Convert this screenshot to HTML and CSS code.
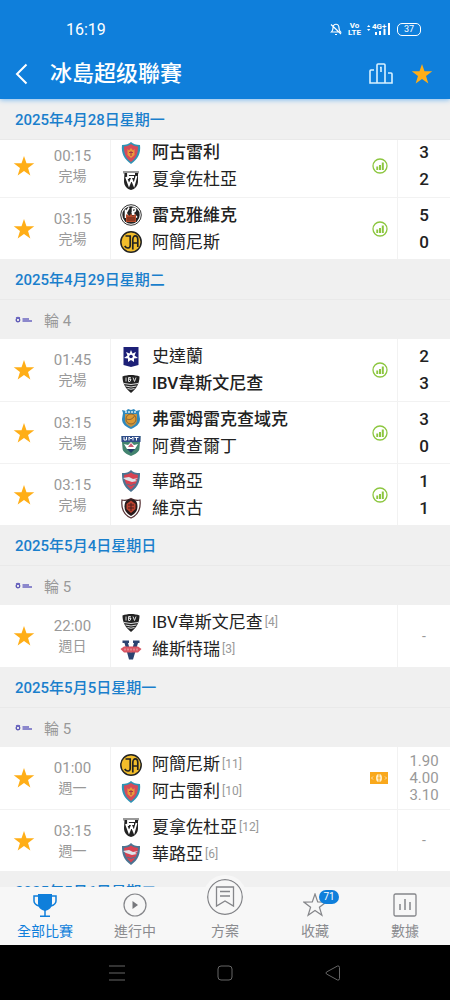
FILE: index.html
```html
<!DOCTYPE html>
<html lang="zh-Hant">

<head>
  <meta charset="UTF-8">
  <meta name="viewport" content="width=device-width, initial-scale=1.0">
  <title>冰島超级聯賽</title>
  <link rel="stylesheet" href="styles.css">
</head>

<body>
  <!-- 圖標 -->
  <svg class="sprite" aria-hidden="true">
    <symbol id="star" viewBox="0 0 24 24">
      <path d="M12 1l2.700 8 8.500.1-6.800 5.100 2.500 8.100-6.900-4.900-6.900 4.900 2.500-8.100L.8 9.100l8.500-.1z" />
    </symbol>
    <symbol id="stats" viewBox="0 0 16 16">
      <circle cx="8" cy="8" r="7" fill="none" stroke="#8cc63f" stroke-width="1.300" />
      <path d="M4.300 8.500h1.900V12H4.300zM7 7h2v5H7zM9.800 4.500h2V12h-2z" fill="#8cc63f" />
    </symbol>
    <symbol id="league" viewBox="0 0 18 8">
      <circle cx="3" cy="4" r="1.800" fill="none" stroke="#5a55b5" stroke-width="1.300" />
      <path d="M1 2l2-.5L5 2M7.500 3H14M7.500 5H17" stroke="#6b66c0" stroke-width="1.500" fill="none" />
    </symbol>
    <symbol id="afturelding" viewBox="0 0 22 22">
      <path d="M11 0c2 2 5 3 9 3 1 8-2 14-9 19C4 17 1 11 2 3c4 0 7-1 9-3z" fill="#2f93b5" />
      <path d="M11 2c2 1.500 4 2.500 7 2.500 0 6-1 11-7 15.500-6-4.500-7-9.500-7-15.500 3 0 5-1 7-2.500z" fill="#d64b58" />
      <path d="M7.500 7L9 8.500 11 6l2 2.500L14.500 7v6L11 16l-3.500-3z" fill="#e99a3c" />
      <path d="M9 10.500h4M11 9v5" stroke="#a83343" />
    </symbol>
    <symbol id="fh" viewBox="0 0 22 22">
      <path d="M3 2h16v2.500H3z" fill="#999" />
      <path d="M4.500 4h13.500v8c0 5-3 8-7 9-4-1-7-4-7-9z" fill="#222" />
      <path d="M8 4v6M8 5h7M8 8h6M6 8l3 8 2.500-6 2.500 6L16.500 7" fill="none" stroke="#fff" stroke-width="1.800" />
    </symbol>
    <symbol id="kr" viewBox="0 0 22 22">
      <circle cx="11" cy="11" r="10.300" fill="#fff" stroke="#333" />
      <circle cx="11" cy="11" r="8.700" fill="#222" />
      <path d="M5.500 5.500V14M9 3.500L6 9l2 3M12.500 11V4.500c4-1 4 3 0 4l4.500 5" fill="none" stroke="#fff" stroke-width="1.600" />
      <path d="M6 10.500h2v1h2v-1h2v1h2v-1h2v7.500H6z" fill="#b64a2b" />
      <path d="M7 14h8M7 16h8" stroke="#5a2519" />
    </symbol>
    <symbol id="ia" viewBox="0 0 22 22">
      <circle cx="11" cy="11" r="10.200" fill="#f2bd2b" stroke="#222" stroke-width="1.500" />
      <path d="M5.500 5h4.700v9.500c0 3-3.500 3.500-5.500.5M12.800 18.500V9c0-5.500 5-5.500 5 0v7M12.800 12h5" fill="none" stroke="#222" stroke-width="1.700" />
    </symbol>
    <symbol id="stjarnan" viewBox="0 0 22 22">
      <path d="M3.500 1h15v18L11 21l-7.500-2z" fill="#1d2077" />
      <path d="M11 4l1.500 3.500L16 6l-1.500 3.500L18 12l-4 .5V16l-3-2-3 2v-3.500L4 12l3.500-2.500L6 6l3.500 1.500z" fill="#fff" />
      <circle cx="11" cy="10.500" r="1.800" fill="#1d2077" />
    </symbol>
    <symbol id="ibv" viewBox="0 0 22 22">
      <path d="M2.500 3.500c5-2 12-2 17 0 0 7-3 12-8.500 16.500C5.500 15.500 2.500 10.500 2.500 3.500z" fill="#222" />
      <path d="M6 4.500v4M8.500 4.500h2l-1 2h1.500l-1 2H8.500zM13 4.500l1.500 4 1.500-4M4 10.500q7 2 14 0M5.500 13q5.500 2 11 0M7.500 15.500q3.500 1.500 7 0" fill="none" stroke="#ddd" />
    </symbol>
    <symbol id="fram" viewBox="0 0 22 22">
      <path d="M2 2l4 1 2-2 3 1 3-1 2 2 4-1-1 3 1 6c0 5-4 8-9 10-5-2-9-5-9-10l1-6z" fill="#2f88bd" />
      <path d="M5 6h12v6c0 3-2 5-6 7-4-2-6-4-6-7z" fill="#c69340" />
      <circle cx="11" cy="11" r="5" fill="#df9b34" stroke="#8d642e" />
      <path d="M6.500 11q5 2 8-3" fill="none" stroke="#8d642e" />
      <path d="M5 4h12" stroke="#d8edf4" stroke-width="1.500" stroke-dasharray="2 1" />
    </symbol>
    <symbol id="fjolnir" viewBox="0 0 22 22">
      <path d="M1.500 1h19l-1 12c0 4-4 6-8.500 8-4.500-2-8.500-4-8.500-8z" fill="#43846f" />
      <path d="M1.500 1h19v6h-19z" fill="#304d89" />
      <path d="M4 2v3h2.500V2M9 5.500V2l2 2 2-2v3.500M14.500 2.500h4M16.500 2.500v3" fill="none" stroke="#fff" />
      <path d="M4 9l4 1 3-3 3 3 4-1-3 5H7z" fill="#fff" />
      <path d="M8 12l3-4 3 4z" fill="#c95d75" />
      <path d="M7 14h8l-4 4z" fill="#203f67" />
    </symbol>
    <symbol id="valur" viewBox="0 0 22 22">
      <path d="M11 0c2 2.500 5 3 9 3 0 8-1 13-9 19C3 16 2 11 2 3c4 0 7-.5 9-3z" fill="#4b7492" />
      <path d="M11 2.500c2 1.500 4 2 7 2.500-.5 6-2 10-7 14.500C6 15 4.500 11 4 5c3-.5 5-1 7-2.500z" fill="#d64352" />
      <path d="M3 8l6-1 4 2 5-1-3 2 2 1-5 1-6-2z" fill="#dce4ea" />
      <path d="M7 14l4 1.500 4-1.500" fill="none" stroke="#4b7492" />
    </symbol>
    <symbol id="vikingur" viewBox="0 0 22 22">
      <path d="M2 3q5 1 9-1.500Q15 4 20 3c1 9-2 15-9 18C4 18 1 12 2 3z" fill="#fff" stroke="#542f32" stroke-width="1.200" />
      <path d="M11 2c4.500 0 6.500 3 6.500 7.500 0 5-3 7.500-6.500 9.500-3.500-2-6.500-4.500-6.500-9.500C4.500 5 6.500 2 11 2z" fill="#291a1b" />
      <path d="M6.500 7L11 3.500 15.500 7v5L11 16l-4.500-4z" fill="#b9412f" />
      <path d="M8 8h6M8 11h6M11 6v8" stroke="#4a1c1a" />
    </symbol>
    <symbol id="vestri" viewBox="0 0 22 22">
      <path d="M2.500 1.500H9V4H8l3 10 3-10h-1V1.500h6.500V4H18l-5 16.500H9L4.500 4h-2z" fill="#2b4370" />
      <path d="M.5 10L4 7.500h14l3.500 2.500-3.500 3.500H4z" fill="#d95462" />
      <path d="M5 9.500v2M8 9.500v2M11 9.500v2M14 9.500v2M17 9.500v2" stroke="#eeb5bb" />
    </symbol>
  </svg>

  <div class="app">
    <header>
      <div class="status">
        <span class="clock">16:19</span>
        <div class="signals">
          <svg width="12" height="14" viewBox="0 0 12 14" fill="none" stroke="#fff" stroke-width="1.200">
            <path d="M1.500 10h9C9.500 9 9 8 9 6c0-5-6-5-6 0 0 2-.5 3-1.500 4zM5 12.500h2M1 2.500l10 9.500" />
          </svg>
          <span class="volte">Vo<br>LTE</span>
          <svg width="24" height="14" viewBox="0 0 24 14" fill="#fff">
            <path d="M0 5l1.700-2L3.400 5zM0 7l1.700 2L3.400 7zM8 10h2v3H8zM12 9h2v4h-2zM16.500 7h2v6h-2zM21 1h2v12h-2z" />
            <text x="5" y="7" class="net">4G+</text>
          </svg>
          <span class="battery">37</span>
        </div>
      </div>
      <div class="nav">
        <button class="back" aria-label="返回">
          <svg width="14" height="22" viewBox="0 0 14 22" fill="none" stroke="#fff" stroke-width="2">
            <path d="M12.500 1.500L3 11l9.500 9.500" />
          </svg>
        </button>
        <h1>冰島超级聯賽</h1>
        <button aria-label="積分榜">
          <svg width="24" height="22" viewBox="0 0 24 22" fill="none" stroke="#d9f2ff" stroke-width="1.600">
            <path d="M8 20V2q0-1 1-1h6q1 0 1 1v18M5 7H2q-1 0-1 1v12h22v-9q0-1-1-1h-3M11 4.500h1V9" />
          </svg>
        </button>
        <button aria-label="收藏聯賽"><svg class="star"><use href="#star" /></svg></button>
      </div>
    </header>

    <main>
      <h2 class="date sticky">2025年4月28日星期一</h2>
      <section class="match">
        <button class="fav" aria-label="收藏"><svg class="star"><use href="#star" /></svg></button>
        <div class="time"><span>00:15</span><span class="state">完場</span></div>
        <div class="teams">
          <p class="win"><svg><use href="#afturelding" /></svg>阿古雷利</p>
          <p><svg><use href="#fh" /></svg>夏拿佐杜亞</p>
        </div>
        <svg class="stats"><use href="#stats" /></svg>
        <div class="score"><span>3</span><span>2</span></div>
      </section>
      <section class="match">
        <button class="fav" aria-label="收藏"><svg class="star"><use href="#star" /></svg></button>
        <div class="time"><span>03:15</span><span class="state">完場</span></div>
        <div class="teams">
          <p class="win"><svg><use href="#kr" /></svg>雷克雅維克</p>
          <p><svg><use href="#ia" /></svg>阿簡尼斯</p>
        </div>
        <svg class="stats"><use href="#stats" /></svg>
        <div class="score"><span>5</span><span>0</span></div>
      </section>

      <h2 class="date">2025年4月29日星期二</h2>
      <h3 class="round"><svg><use href="#league" /></svg>輪 4</h3>
      <section class="match">
        <button class="fav" aria-label="收藏"><svg class="star"><use href="#star" /></svg></button>
        <div class="time"><span>01:45</span><span class="state">完場</span></div>
        <div class="teams">
          <p><svg><use href="#stjarnan" /></svg>史達蘭</p>
          <p class="win"><svg><use href="#ibv" /></svg>IBV韋斯文尼查</p>
        </div>
        <svg class="stats"><use href="#stats" /></svg>
        <div class="score"><span>2</span><span>3</span></div>
      </section>
      <section class="match">
        <button class="fav" aria-label="收藏"><svg class="star"><use href="#star" /></svg></button>
        <div class="time"><span>03:15</span><span class="state">完場</span></div>
        <div class="teams">
          <p class="win"><svg><use href="#fram" /></svg>弗雷姆雷克查域克</p>
          <p><svg><use href="#fjolnir" /></svg>阿費查爾丁</p>
        </div>
        <svg class="stats"><use href="#stats" /></svg>
        <div class="score"><span>3</span><span>0</span></div>
      </section>
      <section class="match">
        <button class="fav" aria-label="收藏"><svg class="star"><use href="#star" /></svg></button>
        <div class="time"><span>03:15</span><span class="state">完場</span></div>
        <div class="teams">
          <p><svg><use href="#valur" /></svg>華路亞</p>
          <p><svg><use href="#vikingur" /></svg>維京古</p>
        </div>
        <svg class="stats"><use href="#stats" /></svg>
        <div class="score"><span>1</span><span>1</span></div>
      </section>

      <h2 class="date">2025年5月4日星期日</h2>
      <h3 class="round"><svg><use href="#league" /></svg>輪 5</h3>
      <section class="match">
        <button class="fav" aria-label="收藏"><svg class="star"><use href="#star" /></svg></button>
        <div class="time"><span>22:00</span><span class="state">週日</span></div>
        <div class="teams">
          <p><svg><use href="#ibv" /></svg>IBV韋斯文尼查<small>[4]</small></p>
          <p><svg><use href="#vestri" /></svg>維斯特瑞<small>[3]</small></p>
        </div>
        <div class="score none">-</div>
      </section>

      <h2 class="date">2025年5月5日星期一</h2>
      <h3 class="round"><svg><use href="#league" /></svg>輪 5</h3>
      <section class="match">
        <button class="fav" aria-label="收藏"><svg class="star"><use href="#star" /></svg></button>
        <div class="time"><span>01:00</span><span class="state">週一</span></div>
        <div class="teams">
          <p><svg><use href="#ia" /></svg>阿簡尼斯<small>[11]</small></p>
          <p><svg><use href="#afturelding" /></svg>阿古雷利<small>[10]</small></p>
        </div>
        <svg class="ticket" viewBox="0 0 18 12">
          <path d="M0 0h18v12H0z" fill="#f9a81c" />
          <ellipse cx="9" cy="6" rx="3" ry="4" fill="#fff0cc" />
          <path d="M9 2v8M7.500 6h3" stroke="#f9a81c" />
          <path d="M3 4.500L1.500 6 3 7.500M15 4.500L16.500 6 15 7.500" fill="none" stroke="#fde3ad" />
        </svg>
        <div class="score odds"><span>1.90</span><span>4.00</span><span>3.10</span></div>
      </section>
      <section class="match">
        <button class="fav" aria-label="收藏"><svg class="star"><use href="#star" /></svg></button>
        <div class="time"><span>03:15</span><span class="state">週一</span></div>
        <div class="teams">
          <p><svg><use href="#fh" /></svg>夏拿佐杜亞<small>[12]</small></p>
          <p><svg><use href="#valur" /></svg>華路亞<small>[6]</small></p>
        </div>
        <div class="score none">-</div>
      </section>

      <h2 class="date">2025年5月6日星期二</h2>
    </main>

    <nav class="tabs">
      <a href="#" class="active">
        <svg width="24" height="24" viewBox="0 0 24 24" fill="none" stroke="#0f7fdb" stroke-width="1.500">
          <path d="M5 1h14v9c0 5-3 7-7 8-4-1-7-3-7-8z" fill="#0f7fdb" stroke="none" />
          <path d="M5 3H1v5c0 3 2 4 5 5M19 3h4v5c0 3-2 4-5 5M12 17v6M7 23.200h10" />
        </svg>
        全部比賽
      </a>
      <a href="#">
        <svg width="24" height="24" viewBox="0 0 24 24" fill="none" stroke="#85868a" stroke-width="1.200">
          <circle cx="12" cy="12" r="11" />
          <path d="M9.500 8l5.500 4-5.500 4z" fill="#77787c" stroke="none" />
        </svg>
        進行中
      </a>
      <a href="#" class="plan">
        <svg width="36" height="36" viewBox="0 0 36 36" fill="none" stroke="#85868a" stroke-width="1.300">
          <circle cx="18" cy="18" r="17.300" />
          <path d="M9.500 8h17v19L18 22l-8.500 5zM13 12.500h10M13 17h10" />
        </svg>
        方案
      </a>
      <a href="#">
        <svg width="24" height="24" viewBox="0 0 24 24" fill="none" stroke="#85868a" stroke-width="1.200">
          <use href="#star" />
        </svg>
        <span class="badge">71</span>
        收藏
      </a>
      <a href="#">
        <svg width="24" height="24" viewBox="0 0 24 24" fill="none" stroke="#85868a" stroke-width="1.300">
          <rect x="1" y="1" width="22" height="22" rx="1.500" />
          <path d="M7 11v6M12 6v11M17 9v8" stroke-width="1.500" />
        </svg>
        數據
      </a>
    </nav>

    <footer>
      <button aria-label="菜單">
        <svg width="16" height="16" viewBox="0 0 16 16"><path d="M0 1h16M0 8h16M0 15h16" /></svg>
      </button>
      <button aria-label="主頁">
        <svg width="16" height="16" viewBox="0 0 16 16"><rect x="1" y="1" width="14" height="14" rx="3" /></svg>
      </button>
      <button aria-label="後退">
        <svg width="16" height="16" viewBox="0 0 16 16"><path d="M1.500 7Q.5 8 1.500 9l11 6q2 .5 2-1.500v-11q0-2-2-1.500z" /></svg>
      </button>
    </footer>
  </div>
</body>

</html>
```

FILE: styles.css
```css
* {
  margin: 0;
  padding: 0;
  box-sizing: border-box;
}

body {
  font-family: Roboto, "Noto Sans CJK TC", sans-serif;
  background-color: #f0f0f0;
  color: #222;
}

button {
  display: flex;
  align-items: center;
  justify-content: center;
  border: none;
  background: none;
  cursor: pointer;
}

a {
  text-decoration: none;
}

.sprite {
  display: none;
}

.app {
  display: flex;
  flex-direction: column;
  height: 100vh;
}

/* 頂部 */
header {
  flex: none;
  background-color: #0f7fdb;
  color: #fff;
  box-shadow: 0 1px 5px #7fbcf0;
  position: relative;
  z-index: 2;
}

.status {
  display: flex;
  align-items: center;
  justify-content: space-between;
  height: 48px;
  padding: 10px 29px 0 66px;
}

.clock {
  font-size: 16px;
}

.signals {
  display: flex;
  align-items: center;
  gap: 6px;
}

.volte {
  font-size: 8px;
  font-weight: 700;
  line-height: 7px;
  text-align: center;
}

.net {
  font-size: 8px;
  font-weight: 700;
}

.battery {
  width: 24px;
  height: 13px;
  border: 1px solid #fff;
  border-radius: 5px;
  font-size: 9px;
  line-height: 11px;
  text-align: center;
}

.nav {
  display: flex;
  align-items: center;
  gap: 18px;
  height: 51px;
  padding: 0 17px 0 14px;
}

.nav h1 {
  flex: 1;
  margin-left: 4px;
  font-size: 22px;
  font-weight: 500;
  line-height: 32px;
}

.star {
  width: 22px;
  height: 22px;
  fill: #ffae17;
}

/* 賽程 */
main {
  flex: 1;
  overflow: hidden;
}

.date {
  height: 41px;
  padding-left: 15px;
  border-bottom: 1px solid #e9e9e9;
  background-color: #f0f0f0;
  color: #1a7fcc;
  font-size: 15px;
  font-weight: 500;
  line-height: 43px;
}

/* 吸頂時蓋住第一場的上邊 */
.sticky {
  margin-bottom: -5px;
  position: relative;
  z-index: 1;
}

.round {
  display: flex;
  align-items: center;
  gap: 11px;
  height: 39px;
  padding-left: 15px;
  color: #999;
  font-size: 15px;
  font-weight: 400;
}

.round svg {
  width: 18px;
  height: 8px;
}

.match {
  display: flex;
  align-items: center;
  height: 62px;
  background-color: #fff;
}

.match + .match {
  border-top: 1px solid #f2f2f2;
}

.fav {
  width: 48px;
  height: 100%;
}

.time {
  display: flex;
  flex-direction: column;
  width: 62px;
  padding-right: 14px;
  padding-left: 1px;
  color: #999;
  font-size: 15px;
  line-height: 20px;
  text-align: center;
}

.time .state {
  font-size: 14px;
}

.teams {
  display: flex;
  flex: 1;
  flex-direction: column;
  justify-content: center;
  height: 100%;
  padding-left: 9px;
  border-left: 1px solid #f2f2f2;
}

.teams p {
  display: flex;
  align-items: center;
  font-size: 17px;
  line-height: 27px;
}

.teams p svg {
  width: 22px;
  height: 22px;
  margin-right: 10px;
}

.teams .win {
  font-weight: 500;
}

.teams small {
  margin-left: 2px;
  color: #999;
  font-size: 12px;
}

.stats {
  width: 16px;
  height: 16px;
  margin-right: 9px;
}

.ticket {
  width: 18px;
  height: 12px;
  margin-right: 9px;
}

.score {
  display: flex;
  flex-direction: column;
  align-items: center;
  justify-content: center;
  width: 53px;
  height: 100%;
  border-left: 1px solid #f2f2f2;
  font-size: 17px;
  font-weight: 500;
  line-height: 27px;
}

.odds {
  color: #999;
  font-size: 15px;
  font-weight: 400;
  line-height: 17px;
}

.none {
  color: #999;
  font-size: 14px;
  font-weight: 400;
}

/* 底部標籤 */
.tabs {
  display: flex;
  flex: none;
  height: 58px;
  background-color: #f7f7f7;
  position: relative;
}

.tabs a {
  display: flex;
  flex: 1;
  flex-direction: column;
  align-items: center;
  justify-content: flex-end;
  gap: 4px;
  padding-bottom: 4px;
  color: #8a8b8f;
  font-size: 14px;
  line-height: 20px;
  position: relative;
}

.tabs svg {
  flex: none;
}

.tabs .active {
  color: #0f7fdb;
}

.tabs .plan {
  gap: 2px;
}

/* 中間的按鈕高出標籤欄 */
.plan svg {
  border: 4px solid #f7f7f7;
  border-radius: 50%;
  background-color: #f7f7f7;
  box-sizing: content-box;
}

.badge {
  width: 20px;
  height: 14px;
  border-radius: 7px;
  background-color: #0f7fdb;
  color: #fff;
  font-size: 10px;
  line-height: 14px;
  text-align: center;
  position: absolute;
  top: 3px;
  left: 50%;
  margin-left: 4px;
}

/* 系統導航 */
footer {
  display: flex;
  flex: none;
  align-items: center;
  justify-content: center;
  gap: 92px;
  height: 55px;
  background-color: #000;
}

footer svg {
  fill: none;
  stroke: #666;
}
```
